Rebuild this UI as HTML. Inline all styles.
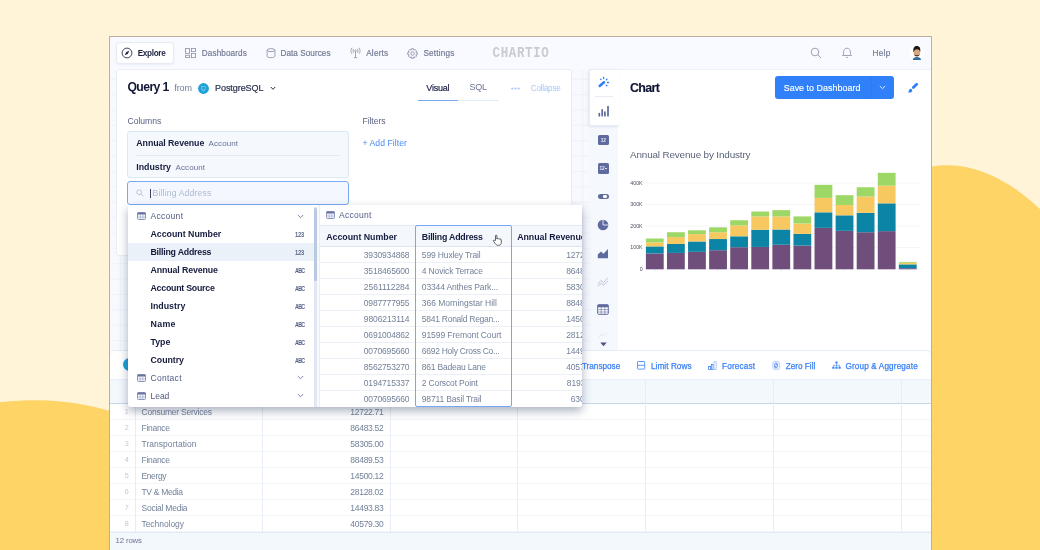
<!DOCTYPE html>
<html lang="en"><head><meta charset="utf-8"><title>Chartio</title>
<style>
html,body{margin:0;padding:0}
body{width:1040px;height:550px;overflow:hidden;position:relative;background:#fff4d8;font-family:"Liberation Sans",sans-serif;-webkit-font-smoothing:antialiased}
.t{position:absolute;white-space:nowrap}
.m{font-family:"Liberation Mono",monospace}
.b{position:absolute;box-sizing:border-box}
.abs{position:absolute;overflow:visible}
#root{position:absolute;left:0;top:0;width:1040px;height:550px;overflow:hidden;will-change:transform}
</style></head>
<body>
<div id="root">
<!-- p00_bg -->
<svg class="abs" style="left:0;top:0" width="1040" height="550" viewBox="0 0 1040 550">
<path d="M0 402.2 C 15 400.6, 27 400.1, 38 400.2 C 65 400.6, 90 404.8, 112 411.6 L112 550 L0 550 Z" fill="#ffd466"/>
<path d="M930 167 C 940 164.500, 955 164.500, 968 167.500 C 995 173.500, 1020 190, 1040 209 L1040 550 L930 550 Z" fill="#ffd466"/>
</svg>
<div class="b" style="left:109.00px;top:36.00px;width:823.00px;height:516.00px;background:#f8faff;border:1px solid #b9b19b;"></div>
<div class="b" style="left:110.00px;top:69.00px;width:821.00px;height:481.00px;background:#f7f9fe;"></div>
<svg class="abs" style="left:0;top:0" width="1040" height="550" viewBox="0 0 1040 550"><path d="M120.8 69V350 M136.2 69V350 M151.6 69V350 M167.0 69V350 M182.4 69V350 M197.8 69V350 M213.2 69V350 M228.6 69V350 M244.0 69V350 M259.4 69V350 M274.8 69V350 M290.2 69V350 M305.6 69V350 M321.0 69V350 M336.4 69V350 M351.8 69V350 M367.2 69V350 M382.6 69V350 M398.0 69V350 M413.4 69V350 M428.8 69V350 M444.2 69V350 M459.6 69V350 M475.0 69V350 M490.4 69V350 M505.8 69V350 M521.2 69V350 M536.6 69V350 M552.0 69V350 M567.4 69V350 M582.8 69V350 M598.2 69V350 M613.6 69V350 M629.0 69V350 M644.4 69V350 M659.8 69V350 M675.2 69V350 M690.6 69V350 M706.0 69V350 M721.4 69V350 M736.8 69V350 M752.2 69V350 M767.6 69V350 M783.0 69V350 M798.4 69V350 M813.8 69V350 M829.2 69V350 M844.6 69V350 M860.0 69V350 M875.4 69V350 M890.8 69V350 M906.2 69V350 M921.6 69V350 M110 79.3H931 M110 94.7H931 M110 110.0H931 M110 125.4H931 M110 140.8H931 M110 156.1H931 M110 171.5H931 M110 186.9H931 M110 202.3H931 M110 217.6H931 M110 233.0H931 M110 248.4H931 M110 263.7H931 M110 279.1H931 M110 294.5H931 M110 309.8H931 M110 325.2H931 M110 340.6H931" stroke="#edf1f8" stroke-width="0.9" fill="none"/></svg>
<!-- p10_nav -->
<div class="b" style="left:110.00px;top:37.00px;width:821.00px;height:32.50px;background:#f8faff;"></div>
<div class="b" style="left:116.00px;top:42.00px;width:58.00px;height:21.50px;background:#fff;border:1px solid #e6eaf3;border-radius:3.500px;box-shadow:0 1px 2px rgba(130,150,190,0.12);"></div>
<svg class="abs" style="left:120.500px;top:47px" width="12" height="12" viewBox="0 0 12 12"><circle cx="6" cy="6" r="4.9" fill="none" stroke="#2a3152" stroke-width="0.9"/><path d="M8.300 3.700 L6.900 6.900 L3.700 8.300 L5.100 5.100 Z" fill="#2a3152"/></svg>
<div class="t" style="top:47.80px;font-size:8.2px;line-height:11px;color:#1c2340;font-weight:bold;letter-spacing:-0.330px;left:137.70px;">Explore</div>
<svg class="abs" style="left:185px;top:47.700px" width="11" height="10.200" viewBox="0 0 11 11" preserveAspectRatio="none" fill="none" stroke="#8a90aa" stroke-width="0.85"><rect x="0.600" y="0.600" width="3.800" height="5.400"/><rect x="6.400" y="0.600" width="4" height="3.300"/><rect x="0.600" y="7.800" width="3.800" height="2.600"/><rect x="6.400" y="5.800" width="4" height="4.600"/></svg>
<div class="t" style="top:47.80px;font-size:8.2px;line-height:11px;color:#70778f;letter-spacing:0.098px;left:201.80px;-webkit-text-stroke:0.15px #70778f;">Dashboards</div>
<svg class="abs" style="left:265.500px;top:47.700px" width="10" height="10.300" viewBox="0 0 11 11" preserveAspectRatio="none" fill="none" stroke="#8a90aa" stroke-width="0.9"><ellipse cx="5.500" cy="2.300" rx="4.300" ry="1.600"/><path d="M1.200 2.300 V8.700 C1.200 9.700 3 10.300 5.500 10.300 C8 10.300 9.800 9.700 9.800 8.700 V2.300"/></svg>
<div class="t" style="top:47.80px;font-size:8.2px;line-height:11px;color:#70778f;letter-spacing:0.038px;left:280.50px;-webkit-text-stroke:0.15px #70778f;">Data Sources</div>
<svg class="abs" style="left:349.500px;top:47px" width="11" height="12" viewBox="0 0 11 12" fill="none" stroke="#8a90aa" stroke-width="0.800"><path d="M5.500 4.500 V10.500 M3.800 10.600 H7.200"/><circle cx="5.500" cy="3.800" r="0.800"/><path d="M3.600 1.800 C2.900 2.900 2.900 4.700 3.600 5.800 M7.400 1.800 C8.100 2.900 8.100 4.700 7.400 5.800 M1.900 0.800 C0.600 2.500 0.600 5.100 1.900 6.800 M9.100 0.800 C10.400 2.500 10.400 5.100 9.100 6.800"/></svg>
<div class="t" style="top:47.80px;font-size:8.2px;line-height:11px;color:#70778f;letter-spacing:0.208px;left:366.20px;-webkit-text-stroke:0.15px #70778f;">Alerts</div>
<svg class="abs" style="left:406.500px;top:47.500px" width="11" height="11" viewBox="0 0 11 11" fill="none" stroke="#8a90aa" stroke-width="0.900"><circle cx="5.500" cy="5.500" r="1.700"/><path d="M4.600 0.700 H6.400 L6.800 2.100 L8.100 1.500 L9.500 2.900 L8.900 4.200 L10.300 4.600 V6.400 L8.900 6.800 L9.500 8.100 L8.100 9.500 L6.800 8.900 L6.400 10.300 H4.600 L4.200 8.900 L2.900 9.500 L1.500 8.100 L2.100 6.800 L0.700 6.400 V4.600 L2.100 4.200 L1.500 2.900 L2.900 1.500 L4.200 2.100 Z"/></svg>
<div class="t" style="top:47.80px;font-size:8.2px;line-height:11px;color:#70778f;letter-spacing:0.182px;left:423.40px;-webkit-text-stroke:0.15px #70778f;">Settings</div>
<div class="t m" style="top:44.20px;font-size:12.5px;line-height:18px;color:#c9cbd3;font-weight:bold;letter-spacing:0.599px;left:492.60px;transform:scaleY(1.2);transform-origin:50% 50%;">CHARTIO</div>
<svg class="abs" style="left:810px;top:47px" width="12" height="12" viewBox="0 0 12 12" fill="none" stroke="#9499aa" stroke-width="0.900"><circle cx="5" cy="5" r="3.800"/><path d="M7.800 7.800 L11 11"/></svg>
<svg class="abs" style="left:841px;top:47px" width="12" height="12" viewBox="0 0 12 12" fill="none" stroke="#9499aa" stroke-width="0.900"><path d="M1.500 8.500 C2.600 7.800 2.600 6.500 2.600 5 C2.600 2.800 4 1.200 6 1.200 C8 1.200 9.400 2.800 9.400 5 C9.400 6.500 9.400 7.800 10.500 8.500 Z M4.900 10 C5.300 10.700 6.700 10.700 7.100 10"/></svg>
<div class="t" style="top:48.00px;font-size:8.2px;line-height:11px;color:#70778f;letter-spacing:0.312px;left:872.50px;-webkit-text-stroke:0.15px #70778f;">Help</div>
<svg class="abs" style="left:0;top:0" width="1040" height="550" viewBox="0 0 1040 550"><circle cx="916.700" cy="52.800" r="7.400" fill="#ffffff"/><path d="M912.800 60 C913 57.800 914.600 57 916.800 57 C919.200 57 920.800 57.800 921 60 Z" fill="#2f6d9c"/><ellipse cx="916.900" cy="52.300" rx="3.100" ry="4.300" fill="#d9a57c"/><path d="M913.500 52.500 C912.800 48.500 914 46 916.800 46 C919.800 46 920.800 48.300 920.200 52 C919.600 50 918.500 49.300 917 49.300 C915.300 49.300 914.200 50.300 913.500 52.500 Z" fill="#1b1819"/><path d="M914 54 C914.500 57 919 57.300 919.900 54 C919 55.600 915 55.600 914 54 Z" fill="#4a3228"/></svg>
<!-- p20_query -->
<div class="b" style="left:116.00px;top:69.00px;width:455.50px;height:186.60px;background:#fff;border:1px solid #e9eef6;border-radius:3px;"></div>
<div class="t" style="top:78.80px;font-size:12.2px;line-height:17px;color:#111736;font-weight:bold;letter-spacing:-0.606px;left:127.50px;">Query 1</div>
<div class="t" style="top:81.70px;font-size:9px;line-height:13px;color:#747b98;letter-spacing:-0.100px;left:174.30px;">from</div>
<svg class="abs" style="left:198.300px;top:82.500px" width="11" height="11" viewBox="0 0 11 11"><circle cx="5.500" cy="5.500" r="5.400" fill="#1da1d8"/><path d="M3.600 3.500 H6.800 C7.500 3.500 7.800 4.300 7.600 5.200 C7.400 6.100 6.900 6.600 6.200 6.600 V8 H4.800 V6.600 H3.600 Z" fill="none" stroke="#8fd3f0" stroke-width="0.700"/></svg>
<div class="t" style="top:81.70px;font-size:9px;line-height:13px;color:#2a3050;letter-spacing:-0.058px;left:215.00px;-webkit-text-stroke:0.2px #2a3050;">PostgreSQL</div>
<svg class="abs" style="left:269.500px;top:86px" width="6" height="5" viewBox="0 0 6 5" fill="none" stroke="#2a3050" stroke-width="1"><path d="M0.800 1 L3 3.300 L5.200 1"/></svg>
<div class="t" style="top:81.50px;font-size:9px;line-height:13px;color:#20274a;letter-spacing:-0.230px;left:426.30px;-webkit-text-stroke:0.2px #20274a;">Visual</div>
<div class="t" style="top:81.00px;font-size:9px;line-height:13px;color:#6d7493;letter-spacing:-0.254px;left:469.50px;">SQL</div>
<div class="b" style="left:417.50px;top:100.00px;width:81.50px;height:1.00px;background:#e3ebf6;"></div>
<div class="b" style="left:417.50px;top:99.70px;width:40.50px;height:1.30px;background:#7aa9f5;"></div>
<svg class="abs" style="left:510.500px;top:87px" width="9" height="3" viewBox="0 0 9 3" fill="#a8c6f8"><circle cx="1.300" cy="1.500" r="1.100"/><circle cx="4.500" cy="1.500" r="1.100"/><circle cx="7.700" cy="1.500" r="1.100"/></svg>
<div class="t" style="top:82.80px;font-size:8.2px;line-height:11px;color:#a8c6f8;letter-spacing:-0.272px;left:530.80px;">Collapse</div>
<div class="t" style="top:114.50px;font-size:8.6px;line-height:12px;color:#5a6284;letter-spacing:-0.022px;left:127.50px;">Columns</div>
<div class="t" style="top:114.50px;font-size:8.6px;line-height:12px;color:#5a6284;letter-spacing:-0.068px;left:362.50px;">Filters</div>
<div class="t" style="top:136.50px;font-size:8.6px;line-height:12px;color:#4a8af4;letter-spacing:0.069px;left:362.50px;">+ Add Filter</div>
<div class="b" style="left:127.00px;top:131.00px;width:222.00px;height:46.50px;background:#f5f9fe;border:1px solid #dde8f5;border-radius:3px;"></div>
<div class="t" style="top:137.00px;font-size:8.8px;line-height:12px;color:#151b3d;font-weight:bold;letter-spacing:-0.073px;left:136.30px;">Annual Revenue</div>
<div class="t" style="top:138.00px;font-size:8px;line-height:11px;color:#6a7294;letter-spacing:0.099px;left:208.50px;">Account</div>
<div class="b" style="left:136.30px;top:155.20px;width:203.70px;height:0.80px;background:#e1eaf5;"></div>
<div class="t" style="top:160.80px;font-size:8.8px;line-height:12px;color:#151b3d;font-weight:bold;left:136.30px;">Industry</div>
<div class="t" style="top:161.80px;font-size:8px;line-height:11px;color:#6a7294;letter-spacing:0.099px;left:175.50px;">Account</div>
<div class="b" style="left:127.00px;top:181.00px;width:222.00px;height:23.50px;background:#f4f8fe;border:1px solid #7aa9f4;border-radius:3px;"></div>
<svg class="abs" style="left:135.500px;top:189px" width="8" height="8" viewBox="0 0 8 8" fill="none" stroke="#b4c0d6" stroke-width="0.900"><circle cx="3.200" cy="3.200" r="2.400"/><path d="M5 5 L7.300 7.300"/></svg>
<div class="b" style="left:149.80px;top:188.50px;width:0.80px;height:9.00px;background:#3a4160;"></div>
<div class="t" style="top:187.00px;font-size:8.6px;line-height:12px;color:#adb8cf;letter-spacing:0.171px;left:152.50px;">Billing Address</div>
<!-- p30_table -->
<div class="b" style="left:110.00px;top:349.50px;width:821.00px;height:200.50px;background:#fff;border-top:1px solid #e6ecf5;border-radius:5px 5px 0 0;"></div>
<div class="b" style="left:122.70px;top:358.20px;width:13.00px;height:13.00px;background:#1a9fd4;border-radius:50%;"></div>
<div class="t" style="top:361.00px;font-size:8.2px;line-height:11px;color:#3b82f6;left:581.90px;-webkit-text-stroke:0.25px #3b82f6;">Transpose</div>
<svg class="abs" style="left:637px;top:360.700px" width="9" height="9" viewBox="0 0 9 9" fill="none" stroke="#3b82f6" stroke-width="0.800"><rect x="0.500" y="0.500" width="7.200" height="7.600" rx="0.600"/><path d="M0.500 4.300 H7.700"/></svg>
<div class="t" style="top:361.00px;font-size:8.2px;line-height:11px;color:#3b82f6;letter-spacing:0.056px;left:651.00px;-webkit-text-stroke:0.25px #3b82f6;">Limit Rows</div>
<svg class="abs" style="left:707.500px;top:360.700px" width="9" height="9" viewBox="0 0 9 9" fill="none" stroke="#3b82f6" stroke-width="0.800"><rect x="0.600" y="5.500" width="1.800" height="2.900"/><rect x="3.300" y="3.500" width="1.800" height="4.900"/><rect x="6" y="0.800" width="2.200" height="7.600" stroke="#9bbff9"/></svg>
<div class="t" style="top:361.00px;font-size:8.2px;line-height:11px;color:#3b82f6;letter-spacing:0.143px;left:722.10px;-webkit-text-stroke:0.25px #3b82f6;">Forecast</div>
<svg class="abs" style="left:771.500px;top:360.700px" width="9" height="9" viewBox="0 0 9 9" fill="none" stroke-width="0.800"><rect x="0.800" y="0.600" width="6.800" height="7.800" rx="1.800" stroke="#a9c8fb" fill="#eef4fe"/><ellipse cx="4" cy="4.500" rx="1.500" ry="2.500" stroke="#3b82f6"/><path d="M3 6.300 L5.200 2.700" stroke="#3b82f6" stroke-width="0.600"/></svg>
<div class="t" style="top:361.00px;font-size:8.2px;line-height:11px;color:#3b82f6;letter-spacing:-0.014px;left:785.80px;-webkit-text-stroke:0.25px #3b82f6;">Zero Fill</div>
<svg class="abs" style="left:831.500px;top:360.700px" width="9" height="9" viewBox="0 0 9 9" fill="#3b82f6"><rect x="3.400" y="0.500" width="2.200" height="2" rx="0.300"/><path d="M4.500 2.500 V4.300 M1.400 6 V4.300 H7.600 V6 M4.500 4.300 V6" stroke="#3b82f6" stroke-width="0.600" fill="none"/><rect x="0.300" y="5.800" width="2.200" height="2" rx="0.300"/><rect x="3.400" y="5.800" width="2.200" height="2" rx="0.300"/><rect x="6.500" y="5.800" width="2.200" height="2" rx="0.300"/></svg>
<div class="t" style="top:361.00px;font-size:8.2px;line-height:11px;color:#3b82f6;letter-spacing:0.137px;left:845.40px;-webkit-text-stroke:0.25px #3b82f6;">Group &amp; Aggregate</div>
<div class="b" style="left:110.00px;top:379.40px;width:821.00px;height:24.20px;background:#f3f8fd;border-top:1px solid #e9eff7;border-bottom:1px solid #c8d6e9;"></div>
<div class="b" style="left:110.00px;top:419.10px;width:821.00px;height:1.00px;background:#f2f5fa;"></div>
<div class="b" style="left:110.00px;top:435.10px;width:821.00px;height:1.00px;background:#f2f5fa;"></div>
<div class="b" style="left:110.00px;top:451.10px;width:821.00px;height:1.00px;background:#f2f5fa;"></div>
<div class="b" style="left:110.00px;top:467.10px;width:821.00px;height:1.00px;background:#f2f5fa;"></div>
<div class="b" style="left:110.00px;top:483.10px;width:821.00px;height:1.00px;background:#f2f5fa;"></div>
<div class="b" style="left:110.00px;top:499.10px;width:821.00px;height:1.00px;background:#f2f5fa;"></div>
<div class="b" style="left:110.00px;top:515.10px;width:821.00px;height:1.00px;background:#f2f5fa;"></div>
<div class="b" style="left:110.00px;top:531.10px;width:821.00px;height:1.00px;background:#f2f5fa;"></div>
<div class="b" style="left:135.00px;top:379.40px;width:1.00px;height:152.20px;background:#e8edf5;"></div>
<div class="b" style="left:262.20px;top:379.40px;width:1.00px;height:152.20px;background:#e8edf5;"></div>
<div class="b" style="left:389.70px;top:379.40px;width:1.00px;height:152.20px;background:#e8edf5;"></div>
<div class="b" style="left:517.30px;top:379.40px;width:1.00px;height:152.20px;background:#e8edf5;"></div>
<div class="b" style="left:645.00px;top:379.40px;width:1.00px;height:152.20px;background:#e8edf5;"></div>
<div class="b" style="left:772.90px;top:379.40px;width:1.00px;height:152.20px;background:#e8edf5;"></div>
<div class="b" style="left:901.10px;top:379.40px;width:1.00px;height:152.20px;background:#e8edf5;"></div>
<div class="t" style="top:406.70px;font-size:7.2px;line-height:10px;color:#c0c8d6;left:124.80px;">1</div>
<div class="t" style="top:405.70px;font-size:8.5px;line-height:12px;color:#73819a;letter-spacing:-0.229px;left:141.50px;">Consumer Services</div>
<div class="t" style="top:405.70px;font-size:8.5px;line-height:12px;color:#73819a;letter-spacing:-0.279px;right:656.48px;text-align:right;">12722.71</div>
<div class="t" style="top:422.70px;font-size:7.2px;line-height:10px;color:#c0c8d6;left:124.80px;">2</div>
<div class="t" style="top:421.70px;font-size:8.5px;line-height:12px;color:#73819a;letter-spacing:-0.290px;left:141.50px;">Finance</div>
<div class="t" style="top:421.70px;font-size:8.5px;line-height:12px;color:#73819a;letter-spacing:-0.279px;right:656.48px;text-align:right;">86483.52</div>
<div class="t" style="top:438.70px;font-size:7.2px;line-height:10px;color:#c0c8d6;left:124.80px;">3</div>
<div class="t" style="top:437.70px;font-size:8.5px;line-height:12px;color:#73819a;letter-spacing:0.039px;left:141.50px;">Transportation</div>
<div class="t" style="top:437.70px;font-size:8.5px;line-height:12px;color:#73819a;letter-spacing:-0.279px;right:656.48px;text-align:right;">58305.00</div>
<div class="t" style="top:454.70px;font-size:7.2px;line-height:10px;color:#c0c8d6;left:124.80px;">4</div>
<div class="t" style="top:453.70px;font-size:8.5px;line-height:12px;color:#73819a;letter-spacing:-0.290px;left:141.50px;">Finance</div>
<div class="t" style="top:453.70px;font-size:8.5px;line-height:12px;color:#73819a;letter-spacing:-0.279px;right:656.48px;text-align:right;">88489.53</div>
<div class="t" style="top:470.70px;font-size:7.2px;line-height:10px;color:#c0c8d6;left:124.80px;">5</div>
<div class="t" style="top:469.70px;font-size:8.5px;line-height:12px;color:#73819a;letter-spacing:-0.386px;left:141.50px;">Energy</div>
<div class="t" style="top:469.70px;font-size:8.5px;line-height:12px;color:#73819a;letter-spacing:-0.279px;right:656.48px;text-align:right;">14500.12</div>
<div class="t" style="top:486.70px;font-size:7.2px;line-height:10px;color:#c0c8d6;left:124.80px;">6</div>
<div class="t" style="top:485.70px;font-size:8.5px;line-height:12px;color:#73819a;letter-spacing:-0.323px;left:141.50px;">TV &amp; Media</div>
<div class="t" style="top:485.70px;font-size:8.5px;line-height:12px;color:#73819a;letter-spacing:-0.279px;right:656.48px;text-align:right;">28128.02</div>
<div class="t" style="top:502.70px;font-size:7.2px;line-height:10px;color:#c0c8d6;left:124.80px;">7</div>
<div class="t" style="top:501.70px;font-size:8.5px;line-height:12px;color:#73819a;letter-spacing:-0.242px;left:141.50px;">Social Media</div>
<div class="t" style="top:501.70px;font-size:8.5px;line-height:12px;color:#73819a;letter-spacing:-0.279px;right:656.48px;text-align:right;">14493.83</div>
<div class="t" style="top:518.70px;font-size:7.2px;line-height:10px;color:#c0c8d6;left:124.80px;">8</div>
<div class="t" style="top:517.70px;font-size:8.5px;line-height:12px;color:#73819a;letter-spacing:-0.056px;left:141.50px;">Technology</div>
<div class="t" style="top:517.70px;font-size:8.5px;line-height:12px;color:#73819a;letter-spacing:-0.279px;right:656.48px;text-align:right;">40579.30</div>
<div class="b" style="left:110.00px;top:531.60px;width:821.00px;height:18.40px;background:#f3f8fd;border-top:1px solid #e4eaf3;"></div>
<div class="t" style="top:535.00px;font-size:7.8px;line-height:11px;color:#6a7594;letter-spacing:-0.152px;left:115.60px;">12 rows</div>
<!-- p40_chart -->
<div class="b" style="left:589.00px;top:69.00px;width:342.00px;height:280.50px;background:#fff;border-top:1px solid #edf1f8;"></div>
<div class="b" style="left:589.00px;top:125.50px;width:29.00px;height:224.00px;background:#f5f8fd;"></div>
<div class="b" style="left:589.00px;top:69.00px;width:29.50px;height:56.50px;background:#fff;border:1px solid #e9eef6;border-right:none;border-radius:3px 0 0 3px;box-shadow:-1px 1px 3px rgba(120,140,180,0.18);"></div>
<div class="b" style="left:595.00px;top:96.20px;width:18.00px;height:0.90px;background:#e6ecf5;"></div>
<svg class="abs" style="left:0;top:0" width="1040" height="550" viewBox="0 0 1040 550"><path d="M599.700 86 L604 82.200" stroke="#2f7df6" stroke-width="2.500" stroke-linecap="round" fill="none"/><g stroke="#2f7df6" stroke-width="1.300" stroke-linecap="round" fill="none"><path d="M600.500 79.100 L601 79.600"/><path d="M603.600 77.500 V78.400"/><path d="M606.900 79.300 L606.300 79.900"/><path d="M607.500 82.500 H608.500"/><path d="M606.300 85.200 L606.900 85.800"/></g><g stroke="#5d6a9a" stroke-width="1.700" stroke-linecap="round" fill="none"><path d="M599.300 113.600 V115.700"/><path d="M602.200 109.900 V115.700"/><path d="M604.900 112 V115.700"/><path d="M608 106.700 V115.700"/></g></svg>
<div class="b" style="left:598.10px;top:135.10px;width:10.60px;height:10.30px;background:#606b9d;border-radius:1.500px;"></div>
<div class="t" style="top:136.80px;font-size:4.8px;line-height:7px;color:#e4e7f3;font-weight:bold;left:600.70px;">12</div>
<div class="b" style="left:598.10px;top:163.30px;width:10.60px;height:10.30px;background:#606b9d;border-radius:1.500px;"></div>
<div class="t" style="top:165.00px;font-size:4.8px;line-height:7px;color:#e4e7f3;font-weight:bold;left:599.40px;">12</div>
<div class="b" style="left:605.20px;top:167.70px;width:2.00px;height:0.70px;background:#e4e7f3;"></div>
<div class="b" style="left:598.10px;top:194.00px;width:10.60px;height:5.00px;background:#606b9d;border-radius:2.500px;"></div>
<div class="b" style="left:602.80px;top:195.30px;width:4.70px;height:2.40px;background:#fff;border-radius:1.200px;"></div>
<svg class="abs" style="left:597.200px;top:218.500px" width="12" height="12" viewBox="0 0 12 12"><circle cx="6" cy="6" r="5.300" fill="#606b9d"/><path d="M6 6 V0.700 M6 6 H11.300" stroke="#fff" stroke-width="0.800" fill="none"/></svg>
<svg class="abs" style="left:597.200px;top:247.500px" width="12" height="11" viewBox="0 0 12 11"><path d="M0.800 10.300 V6.500 L4 3.500 L6.500 5.800 L11 1 V10.300 Z" fill="#606b9d"/></svg>
<svg class="abs" style="left:597.200px;top:275.500px" width="12" height="11" viewBox="0 0 12 11" fill="none" stroke="#b9c1d8" stroke-width="0.900"><path d="M0.800 8 L4 4.500 L6.500 6.500 L11 1.500 M0.800 10 L4 7.500 L6.500 9 L11 5"/></svg>
<svg class="abs" style="left:597.200px;top:303.500px" width="12" height="11" viewBox="0 0 12 11"><rect x="0.700" y="0.700" width="10.600" height="9.600" rx="1" fill="#fff" stroke="#606b9d" stroke-width="1"/><rect x="0.700" y="0.700" width="10.600" height="2.600" fill="#606b9d"/><path d="M0.700 5.600 H11.300 M0.700 8 H11.300 M4.200 3 V10.300 M7.800 3 V10.300" stroke="#606b9d" stroke-width="0.600" fill="none"/></svg>
<svg class="abs" style="left:598.200px;top:330.500px" width="10" height="7" viewBox="0 0 10 7" fill="none" stroke="#dfe4ee" stroke-width="0.900"><path d="M0.800 6 L3.500 3 L5.500 4.500 L9 1"/></svg>
<svg class="abs" style="left:599.800px;top:342px" width="7" height="5" viewBox="0 0 7 5"><path d="M0.300 0.500 H6.700 L3.500 4.300 Z" fill="#4a5383"/></svg>
<div class="t" style="top:80.00px;font-size:12.4px;line-height:17px;color:#0f1535;font-weight:bold;letter-spacing:-0.595px;left:630.00px;-webkit-text-stroke:0.15px #0f1535;">Chart</div>
<div class="b" style="left:775.00px;top:76.20px;width:119.30px;height:22.70px;background:#2f80f9;border-radius:3px;"></div>
<div class="b" style="left:871.00px;top:76.20px;width:0.80px;height:22.70px;background:#2d7bf3;"></div>
<div class="t" style="top:81.60px;font-size:8.9px;line-height:12px;color:#fff;letter-spacing:0.044px;left:783.70px;-webkit-text-stroke:0.15px #fff;">Save to Dashboard</div>
<svg class="abs" style="left:879.300px;top:85.300px" width="7" height="5" viewBox="0 0 7 5" fill="none" stroke="#fff" stroke-width="0.850"><path d="M0.800 1 L3.500 3.600 L6.200 1"/></svg>
<svg class="abs" style="left:0;top:0" width="1040" height="550" viewBox="0 0 1040 550"><path d="M913.300 87.500 L916.700 84.200" stroke="#2f80f9" stroke-width="2.700" stroke-linecap="round" fill="none"/><path d="M910.500 88.700 C911.800 88.700 912.500 89.800 912.200 90.900 C911.800 92.300 910 92.900 907.900 92.500 C909.200 91.600 908.700 88.900 910.500 88.700 Z" fill="#2f80f9"/></svg>
<div class="t" style="top:148.00px;font-size:9.9px;line-height:14px;color:#5a6378;letter-spacing:-0.143px;left:630.00px;">Annual Revenue by Industry</div>
<svg class="abs" style="left:0;top:0" width="1040" height="550" viewBox="0 0 1040 550">
<path d="M645 183.0 H920" stroke="#f1f2f5" stroke-width="0.800"/>
<path d="M645 204.5 H920" stroke="#f1f2f5" stroke-width="0.800"/>
<path d="M645 226.0 H920" stroke="#f1f2f5" stroke-width="0.800"/>
<path d="M645 247.5 H920" stroke="#f1f2f5" stroke-width="0.800"/>
<path d="M645 269.0 H920" stroke="#f1f2f5" stroke-width="0.800"/>
<rect x="645.90" y="253.48" width="17.8" height="15.80" fill="#6f4e7c"/>
<rect x="645.90" y="246.39" width="17.8" height="7.08" fill="#0b84a5"/>
<rect x="645.90" y="242.31" width="17.8" height="4.09" fill="#f6c85f"/>
<rect x="645.90" y="238.49" width="17.8" height="3.81" fill="#9dd866"/>
<rect x="666.98" y="252.93" width="17.8" height="16.35" fill="#6f4e7c"/>
<rect x="666.98" y="243.94" width="17.8" height="8.99" fill="#0b84a5"/>
<rect x="666.98" y="237.13" width="17.8" height="6.81" fill="#f6c85f"/>
<rect x="666.98" y="232.23" width="17.8" height="4.90" fill="#9dd866"/>
<rect x="688.06" y="251.84" width="17.8" height="17.44" fill="#6f4e7c"/>
<rect x="688.06" y="241.49" width="17.8" height="10.35" fill="#0b84a5"/>
<rect x="688.06" y="234.13" width="17.8" height="7.36" fill="#f6c85f"/>
<rect x="688.06" y="230.32" width="17.8" height="3.81" fill="#9dd866"/>
<rect x="709.14" y="250.21" width="17.8" height="19.07" fill="#6f4e7c"/>
<rect x="709.14" y="239.04" width="17.8" height="11.17" fill="#0b84a5"/>
<rect x="709.14" y="232.23" width="17.8" height="6.81" fill="#f6c85f"/>
<rect x="709.14" y="227.32" width="17.8" height="4.90" fill="#9dd866"/>
<rect x="730.22" y="247.21" width="17.8" height="22.07" fill="#6f4e7c"/>
<rect x="730.22" y="236.31" width="17.8" height="10.90" fill="#0b84a5"/>
<rect x="730.22" y="225.41" width="17.8" height="10.90" fill="#f6c85f"/>
<rect x="730.22" y="220.24" width="17.8" height="5.18" fill="#9dd866"/>
<rect x="751.30" y="246.94" width="17.8" height="22.34" fill="#6f4e7c"/>
<rect x="751.30" y="229.77" width="17.8" height="17.17" fill="#0b84a5"/>
<rect x="751.30" y="216.42" width="17.8" height="13.35" fill="#f6c85f"/>
<rect x="751.30" y="211.52" width="17.8" height="4.90" fill="#9dd866"/>
<rect x="772.38" y="244.76" width="17.8" height="24.52" fill="#6f4e7c"/>
<rect x="772.38" y="229.50" width="17.8" height="15.26" fill="#0b84a5"/>
<rect x="772.38" y="216.42" width="17.8" height="13.08" fill="#f6c85f"/>
<rect x="772.38" y="210.15" width="17.8" height="6.27" fill="#9dd866"/>
<rect x="793.46" y="245.58" width="17.8" height="23.71" fill="#6f4e7c"/>
<rect x="793.46" y="233.86" width="17.8" height="11.72" fill="#0b84a5"/>
<rect x="793.46" y="223.51" width="17.8" height="10.35" fill="#f6c85f"/>
<rect x="793.46" y="216.42" width="17.8" height="7.08" fill="#9dd866"/>
<rect x="814.54" y="227.87" width="17.8" height="41.42" fill="#6f4e7c"/>
<rect x="814.54" y="212.33" width="17.8" height="15.53" fill="#0b84a5"/>
<rect x="814.54" y="197.89" width="17.8" height="14.44" fill="#f6c85f"/>
<rect x="814.54" y="184.81" width="17.8" height="13.08" fill="#9dd866"/>
<rect x="835.62" y="230.86" width="17.8" height="38.42" fill="#6f4e7c"/>
<rect x="835.62" y="215.33" width="17.8" height="15.53" fill="#0b84a5"/>
<rect x="835.62" y="204.98" width="17.8" height="10.35" fill="#f6c85f"/>
<rect x="835.62" y="195.17" width="17.8" height="9.81" fill="#9dd866"/>
<rect x="856.70" y="232.23" width="17.8" height="37.06" fill="#6f4e7c"/>
<rect x="856.70" y="212.88" width="17.8" height="19.35" fill="#0b84a5"/>
<rect x="856.70" y="196.53" width="17.8" height="16.35" fill="#f6c85f"/>
<rect x="856.70" y="187.27" width="17.8" height="9.26" fill="#9dd866"/>
<rect x="877.78" y="231.14" width="17.8" height="38.15" fill="#6f4e7c"/>
<rect x="877.78" y="203.34" width="17.8" height="27.79" fill="#0b84a5"/>
<rect x="877.78" y="185.63" width="17.8" height="17.71" fill="#f6c85f"/>
<rect x="877.78" y="172.83" width="17.8" height="12.81" fill="#9dd866"/>
<rect x="898.86" y="268.19" width="17.8" height="1.09" fill="#6f4e7c"/>
<rect x="898.86" y="264.38" width="17.8" height="3.81" fill="#0b84a5"/>
<rect x="898.86" y="262.74" width="17.8" height="1.63" fill="#f6c85f"/>
<rect x="898.86" y="261.93" width="17.8" height="0.82" fill="#9dd866"/>
<path d="M654.8 269.6 V271.1" stroke="#c9ccd3" stroke-width="0.700"/>
<path d="M718.0 269.6 V271.1" stroke="#c9ccd3" stroke-width="0.700"/>
<path d="M781.3 269.6 V271.1" stroke="#c9ccd3" stroke-width="0.700"/>
<path d="M844.5 269.6 V271.1" stroke="#c9ccd3" stroke-width="0.700"/>
<path d="M907.8 269.6 V271.1" stroke="#c9ccd3" stroke-width="0.700"/>
</svg>
<div class="t" style="top:179.50px;font-size:5.3px;line-height:7px;color:#4d5160;right:397.40px;text-align:right;">400K</div>
<div class="t" style="top:201.00px;font-size:5.3px;line-height:7px;color:#4d5160;right:397.40px;text-align:right;">300K</div>
<div class="t" style="top:222.50px;font-size:5.3px;line-height:7px;color:#4d5160;right:397.40px;text-align:right;">200K</div>
<div class="t" style="top:244.00px;font-size:5.3px;line-height:7px;color:#4d5160;right:397.40px;text-align:right;">100K</div>
<div class="t" style="top:265.50px;font-size:5.3px;line-height:7px;color:#4d5160;right:397.40px;text-align:right;">0</div>
<!-- p50_drop -->
<div class="b" style="left:127.50px;top:205.00px;width:454.90px;height:201.80px;background:#fff;border-radius:0 0 3px 3px;box-shadow:0 4px 10px rgba(45,60,95,0.40);"></div>
<div class="b" style="left:127.50px;top:243.25px;width:192.30px;height:17.25px;background:#eaf1f9;"></div>
<div class="b" style="left:316.60px;top:205.00px;width:3.70px;height:201.80px;background:linear-gradient(90deg,#f4f7fb,#fbfcfe);border-right:1px solid #e6ecf5;opacity:0.85;"></div>
<div class="b" style="left:313.90px;top:207.00px;width:2.70px;height:199.80px;background:#dfe8f4;"></div>
<div class="b" style="left:313.90px;top:208.30px;width:2.70px;height:72.70px;background:#b9c9e2;border-radius:1.300px;"></div>
<svg class="abs" style="left:137.00px;top:212.00px" width="9" height="8" viewBox="0 0 9 8"><rect x="0.500" y="0.500" width="8" height="7" rx="1" fill="#f4f5fa" stroke="#737ca8" stroke-width="0.800"/><rect x="0.500" y="0.500" width="8" height="2" fill="#6a74a2"/><path d="M3.200 2.500 V7.500 M5.800 2.500 V7.500 M0.500 5 H8.500" stroke="#8d96bb" stroke-width="0.500" fill="none"/></svg>
<div class="t" style="top:210.20px;font-size:8.5px;line-height:12px;color:#4f5b85;letter-spacing:0.298px;left:150.50px;">Account</div>
<svg class="abs" style="left:297.00px;top:213.70px" width="7" height="5" viewBox="0 0 7 5" fill="none" stroke="#5b6596" stroke-width="0.800"><path d="M0.800 1 L3.500 3.700 L6.200 1"/></svg>
<div class="t" style="top:228.00px;font-size:8.8px;line-height:12px;color:#151b3d;font-weight:bold;letter-spacing:-0.007px;left:150.50px;">Account Number</div>
<div class="t" style="top:230.60px;font-size:5.7px;line-height:8px;color:#5a648d;font-weight:bold;letter-spacing:-0.155px;left:295.10px;transform:scaleY(1.2);">123</div>
<div class="t" style="top:246.00px;font-size:8.8px;line-height:12px;color:#151b3d;font-weight:bold;letter-spacing:-0.230px;left:150.50px;">Billing Address</div>
<div class="t" style="top:248.60px;font-size:5.7px;line-height:8px;color:#5a648d;font-weight:bold;letter-spacing:-0.155px;left:295.10px;transform:scaleY(1.2);">123</div>
<div class="t" style="top:264.00px;font-size:8.8px;line-height:12px;color:#151b3d;font-weight:bold;letter-spacing:-0.111px;left:150.50px;">Annual Revenue</div>
<div class="t" style="top:268.20px;font-size:5.3px;line-height:7px;color:#5a648d;font-weight:bold;letter-spacing:-0.691px;left:295.10px;transform:scaleY(1.2);">ABC</div>
<div class="t" style="top:282.00px;font-size:8.8px;line-height:12px;color:#151b3d;font-weight:bold;letter-spacing:-0.245px;left:150.50px;">Account Source</div>
<div class="t" style="top:286.20px;font-size:5.3px;line-height:7px;color:#5a648d;font-weight:bold;letter-spacing:-0.691px;left:295.10px;transform:scaleY(1.2);">ABC</div>
<div class="t" style="top:300.00px;font-size:8.8px;line-height:12px;color:#151b3d;font-weight:bold;letter-spacing:0.012px;left:150.50px;">Industry</div>
<div class="t" style="top:304.20px;font-size:5.3px;line-height:7px;color:#5a648d;font-weight:bold;letter-spacing:-0.691px;left:295.10px;transform:scaleY(1.2);">ABC</div>
<div class="t" style="top:318.00px;font-size:8.8px;line-height:12px;color:#151b3d;font-weight:bold;letter-spacing:0.344px;left:150.50px;">Name</div>
<div class="t" style="top:322.20px;font-size:5.3px;line-height:7px;color:#5a648d;font-weight:bold;letter-spacing:-0.691px;left:295.10px;transform:scaleY(1.2);">ABC</div>
<div class="t" style="top:336.00px;font-size:8.8px;line-height:12px;color:#151b3d;font-weight:bold;letter-spacing:-0.029px;left:150.50px;">Type</div>
<div class="t" style="top:340.20px;font-size:5.3px;line-height:7px;color:#5a648d;font-weight:bold;letter-spacing:-0.691px;left:295.10px;transform:scaleY(1.2);">ABC</div>
<div class="t" style="top:354.00px;font-size:8.8px;line-height:12px;color:#151b3d;font-weight:bold;letter-spacing:-0.038px;left:150.50px;">Country</div>
<div class="t" style="top:358.20px;font-size:5.3px;line-height:7px;color:#5a648d;font-weight:bold;letter-spacing:-0.691px;left:295.10px;transform:scaleY(1.2);">ABC</div>
<svg class="abs" style="left:137.00px;top:374.00px" width="9" height="8" viewBox="0 0 9 8"><rect x="0.500" y="0.500" width="8" height="7" rx="1" fill="#f4f5fa" stroke="#737ca8" stroke-width="0.800"/><rect x="0.500" y="0.500" width="8" height="2" fill="#6a74a2"/><path d="M3.200 2.500 V7.500 M5.800 2.500 V7.500 M0.500 5 H8.500" stroke="#8d96bb" stroke-width="0.500" fill="none"/></svg>
<div class="t" style="top:372.20px;font-size:8.5px;line-height:12px;color:#4f5b85;letter-spacing:0.284px;left:150.50px;">Contact</div>
<svg class="abs" style="left:297.00px;top:374.80px" width="7" height="5" viewBox="0 0 7 5" fill="none" stroke="#5b6596" stroke-width="0.800"><path d="M0.800 1 L3.500 3.700 L6.200 1"/></svg>
<svg class="abs" style="left:137.00px;top:392.00px" width="9" height="8" viewBox="0 0 9 8"><rect x="0.500" y="0.500" width="8" height="7" rx="1" fill="#f4f5fa" stroke="#737ca8" stroke-width="0.800"/><rect x="0.500" y="0.500" width="8" height="2" fill="#6a74a2"/><path d="M3.200 2.500 V7.500 M5.800 2.500 V7.500 M0.500 5 H8.500" stroke="#8d96bb" stroke-width="0.500" fill="none"/></svg>
<div class="t" style="top:390.20px;font-size:8.5px;line-height:12px;color:#4f5b85;letter-spacing:-0.036px;left:150.50px;">Lead</div>
<svg class="abs" style="left:297.00px;top:392.80px" width="7" height="5" viewBox="0 0 7 5" fill="none" stroke="#5b6596" stroke-width="0.800"><path d="M0.800 1 L3.500 3.700 L6.200 1"/></svg>
<div class="b" style="left:320.3px;top:205px;width:262.100px;height:201.800px;overflow:hidden;border-radius:0 0 3px 0;">
<div class="b" style="left:0.00px;top:20.30px;width:279.70px;height:21.60px;background:#f4f8fd;border-top:1px solid #e3eaf4;border-bottom:1px solid #dbe4f0;"></div>
<div class="b" style="left:0.00px;top:57.40px;width:279.70px;height:0.80px;background:#ecf0f6;"></div>
<div class="b" style="left:0.00px;top:73.40px;width:279.70px;height:0.80px;background:#ecf0f6;"></div>
<div class="b" style="left:0.00px;top:89.40px;width:279.70px;height:0.80px;background:#ecf0f6;"></div>
<div class="b" style="left:0.00px;top:105.40px;width:279.70px;height:0.80px;background:#ecf0f6;"></div>
<div class="b" style="left:0.00px;top:121.40px;width:279.70px;height:0.80px;background:#ecf0f6;"></div>
<div class="b" style="left:0.00px;top:137.40px;width:279.70px;height:0.80px;background:#ecf0f6;"></div>
<div class="b" style="left:0.00px;top:153.40px;width:279.70px;height:0.80px;background:#ecf0f6;"></div>
<div class="b" style="left:0.00px;top:169.40px;width:279.70px;height:0.80px;background:#ecf0f6;"></div>
<div class="b" style="left:0.00px;top:185.40px;width:279.70px;height:0.80px;background:#ecf0f6;"></div>
<div class="b" style="left:95.10px;top:19.80px;width:96.40px;height:181.80px;border:1px solid #77a6f3;border-radius:2px;"></div>
</div>
<svg class="abs" style="left:326.30px;top:211.00px" width="9" height="8" viewBox="0 0 9 8"><rect x="0.500" y="0.500" width="8" height="7" rx="1" fill="#f4f5fa" stroke="#737ca8" stroke-width="0.800"/><rect x="0.500" y="0.500" width="8" height="2" fill="#6a74a2"/><path d="M3.200 2.500 V7.500 M5.800 2.500 V7.500 M0.500 5 H8.500" stroke="#8d96bb" stroke-width="0.500" fill="none"/></svg>
<div class="t" style="top:209.20px;font-size:8.5px;line-height:12px;color:#4f5b85;letter-spacing:0.264px;left:339.00px;">Account</div>
<div class="t" style="top:231.10px;font-size:8.8px;line-height:12px;color:#151b3d;font-weight:bold;letter-spacing:-0.007px;left:326.20px;">Account Number</div>
<div class="t" style="top:231.10px;font-size:8.8px;line-height:12px;color:#151b3d;font-weight:bold;letter-spacing:-0.223px;left:421.80px;">Billing Address</div>
<div class="b" style="left:512px;top:225px;width:70.400px;height:181px;overflow:hidden;">
<div class="t" style="top:6.10px;font-size:8.8px;line-height:12px;color:#151b3d;font-weight:bold;letter-spacing:-0.034px;left:5.20px;">Annual Revenue</div>
<div class="t" style="top:23.70px;font-size:8.5px;line-height:12px;color:#73819a;letter-spacing:-0.156px;left:54.20px;">12722.71</div>
<div class="t" style="top:39.70px;font-size:8.5px;line-height:12px;color:#73819a;letter-spacing:-0.156px;left:54.20px;">86483.52</div>
<div class="t" style="top:55.70px;font-size:8.5px;line-height:12px;color:#73819a;letter-spacing:-0.156px;left:54.20px;">58305.00</div>
<div class="t" style="top:71.70px;font-size:8.5px;line-height:12px;color:#73819a;letter-spacing:-0.156px;left:54.20px;">88489.53</div>
<div class="t" style="top:87.70px;font-size:8.5px;line-height:12px;color:#73819a;letter-spacing:-0.156px;left:54.20px;">14500.12</div>
<div class="t" style="top:103.70px;font-size:8.5px;line-height:12px;color:#73819a;letter-spacing:-0.156px;left:54.20px;">28128.02</div>
<div class="t" style="top:119.70px;font-size:8.5px;line-height:12px;color:#73819a;letter-spacing:-0.156px;left:54.20px;">14493.83</div>
<div class="t" style="top:135.70px;font-size:8.5px;line-height:12px;color:#73819a;letter-spacing:-0.156px;left:54.20px;">40579.30</div>
<div class="t" style="top:151.70px;font-size:8.5px;line-height:12px;color:#73819a;letter-spacing:-0.156px;left:54.83px;">81935.11</div>
<div class="t" style="top:167.70px;font-size:8.5px;line-height:12px;color:#73819a;letter-spacing:-0.156px;left:58.77px;">6305.20</div>
</div>
<div class="t" style="top:248.70px;font-size:8.5px;line-height:12px;color:#73819a;letter-spacing:-0.175px;right:630.67px;text-align:right;">3930934868</div>
<div class="t" style="top:248.70px;font-size:8.5px;line-height:12px;color:#73819a;letter-spacing:-0.136px;left:421.80px;">599 Huxley Trail</div>
<div class="t" style="top:264.70px;font-size:8.5px;line-height:12px;color:#73819a;letter-spacing:-0.175px;right:630.67px;text-align:right;">3518465600</div>
<div class="t" style="top:264.70px;font-size:8.5px;line-height:12px;color:#73819a;letter-spacing:-0.136px;left:421.80px;">4 Novick Terrace</div>
<div class="t" style="top:280.70px;font-size:8.5px;line-height:12px;color:#73819a;letter-spacing:-0.035px;right:630.53px;text-align:right;">2561112284</div>
<div class="t" style="top:280.70px;font-size:8.5px;line-height:12px;color:#73819a;letter-spacing:-0.143px;left:421.80px;">03344 Anthes Park...</div>
<div class="t" style="top:296.70px;font-size:8.5px;line-height:12px;color:#73819a;letter-spacing:-0.175px;right:630.67px;text-align:right;">0987777955</div>
<div class="t" style="top:296.70px;font-size:8.5px;line-height:12px;color:#73819a;letter-spacing:-0.031px;left:421.80px;">366 Morningstar Hill</div>
<div class="t" style="top:312.70px;font-size:8.5px;line-height:12px;color:#73819a;letter-spacing:-0.105px;right:630.60px;text-align:right;">9806213114</div>
<div class="t" style="top:312.70px;font-size:8.5px;line-height:12px;color:#73819a;letter-spacing:-0.258px;left:421.80px;">5841 Ronald Regan...</div>
<div class="t" style="top:328.70px;font-size:8.5px;line-height:12px;color:#73819a;letter-spacing:-0.175px;right:630.67px;text-align:right;">0691004862</div>
<div class="t" style="top:328.70px;font-size:8.5px;line-height:12px;color:#73819a;letter-spacing:-0.072px;left:421.80px;">91599 Fremont Court</div>
<div class="t" style="top:344.70px;font-size:8.5px;line-height:12px;color:#73819a;letter-spacing:-0.175px;right:630.67px;text-align:right;">0070695660</div>
<div class="t" style="top:344.70px;font-size:8.5px;line-height:12px;color:#73819a;letter-spacing:-0.267px;left:421.80px;">6692 Holy Cross Co...</div>
<div class="t" style="top:360.70px;font-size:8.5px;line-height:12px;color:#73819a;letter-spacing:-0.175px;right:630.67px;text-align:right;">8562753270</div>
<div class="t" style="top:360.70px;font-size:8.5px;line-height:12px;color:#73819a;letter-spacing:-0.209px;left:421.80px;">861 Badeau Lane</div>
<div class="t" style="top:376.70px;font-size:8.5px;line-height:12px;color:#73819a;letter-spacing:-0.175px;right:630.67px;text-align:right;">0194715337</div>
<div class="t" style="top:376.70px;font-size:8.5px;line-height:12px;color:#73819a;letter-spacing:-0.144px;left:421.80px;">2 Corscot Point</div>
<div class="t" style="top:392.70px;font-size:8.5px;line-height:12px;color:#73819a;letter-spacing:-0.175px;right:630.67px;text-align:right;">0070695660</div>
<div class="t" style="top:392.70px;font-size:8.5px;line-height:12px;color:#73819a;letter-spacing:-0.157px;left:421.80px;">98711 Basil Trail</div>
<svg class="abs" style="left:491.500px;top:234px" width="11" height="12" viewBox="0 0 11 12"><path d="M3.500 6.500 V1.800 C3.500 0.900 4.900 0.900 4.900 1.800 V5 C5 4.300 6.300 4.300 6.400 5.100 C6.600 4.500 7.800 4.600 7.900 5.400 C8.200 4.900 9.300 5.100 9.300 6 V8.500 C9.300 10.300 8.300 11.300 6.500 11.300 C4.800 11.300 4 10.800 3 9.300 L1.500 7.200 C1 6.400 2 5.700 2.700 6.400 Z" fill="#fff" stroke="#222" stroke-width="0.700"/></svg>
</div>
</body></html>
